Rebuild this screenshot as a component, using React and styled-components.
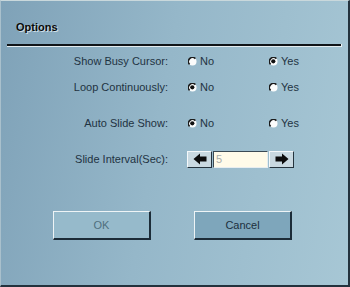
import React, { useState } from "react";
import styled, { createGlobalStyle } from "styled-components";

const Global = createGlobalStyle`
  html, body {
    margin: 0;
    padding: 0;
    background: #8fb1c4;
  }
  body {
    font-family: "Liberation Sans", Arial, sans-serif;
  }
`;

const Frame = styled.div`
  box-sizing: border-box;
  width: 350px;
  height: 287px;
  background: linear-gradient(100deg, #7fa2b8 0%, #95b7c9 45%, #a7c7d5 100%);
  border-top: 1px solid #c9d8dc;
  border-left: 1px solid #a9c0cc;
  border-right: 2px solid #23323d;
  border-bottom: 2px solid #23323d;
  color: #1f3342;
  font-size: 11px;
`;

const Title = styled.h1`
  margin: 0;
  padding: 19px 0 0 15px;
  height: 14px;
  line-height: 14px;
  font-size: 11px;
  font-weight: 700;
  color: #0a0a0a;
  text-shadow: 1px 1px 0 rgba(235, 242, 245, 0.75);
`;

const Rule = styled.div`
  margin: 10px 6px 0 6px;
  height: 2px;
  background: #101418;
  border-bottom: 1px solid #e4ecef;
  border-right: 1px solid #eef3f4;
`;

const Row = styled.div`
  display: grid;
  grid-template-columns: 187px 81px 1fr;
  align-items: center;
  height: 18px;
  margin-top: ${(p) => p.$space}px;
`;

const Label = styled.span`
  text-align: right;
  padding-right: 20px;
  white-space: nowrap;
`;

const Option = styled.label`
  display: flex;
  align-items: center;
  gap: 3px;
  cursor: pointer;
`;

const Spinner = styled.div`
  display: flex;
  align-items: center;
  gap: 1px;
  margin-left: -1px;
  grid-column: 2 / span 2;
`;

const ArrowButton = styled.button`
  box-sizing: border-box;
  width: 25px;
  height: 17px;
  padding: 0;
  display: flex;
  align-items: center;
  justify-content: center;
  background: #c9d9e1;
  border: 1px solid;
  border-color: #f4f8fa #25343e #25343e #f4f8fa;
`;

const ValueBox = styled.input`
  box-sizing: border-box;
  width: 55px;
  height: 17px;
  padding: 0 2px;
  background: #fffbe9;
  border: 1px solid;
  border-color: #3a4a54 #e8eef0 #e8eef0 #3a4a54;
  font-family: "Liberation Sans", Arial, sans-serif;
  font-size: 11px;
  color: #a9aeab;
  outline: none;
`;

const Buttons = styled.div`
  display: flex;
  gap: 43px;
  padding-left: 52px;
  margin-top: 43px;
`;

const Button = styled.button`
  box-sizing: border-box;
  width: 98px;
  height: 29px;
  background: ${(p) => (p.$dim ? "#96bacb" : "#7ea6bb")};
  color: ${(p) => (p.$dim ? "#4f6f7e" : "#1c2f3d")};
  border: 1px solid;
  border-width: 1px 2px 2px 1px;
  border-color: #eef4f6 #1c2c38 #1c2c38 #eef4f6;
  font-family: "Liberation Sans", Arial, sans-serif;
  font-size: 11px;
  padding: 0;
`;

function Radio({ checked }) {
  return (
    <svg width="9" height="9" viewBox="0 0 9 9">
      <circle cx="4.5" cy="4.5" r="4" fill="#fbfcfc" />
      <path
        d="M1.6 7.4 A4 4 0 0 1 7.4 1.6"
        stroke="#1a1a1a"
        strokeWidth="1.6"
        fill="none"
      />
      {checked && <circle cx="4.3" cy="4.3" r="2.1" fill="#111" />}
    </svg>
  );
}

function Arrow({ dir }) {
  const d =
    dir === "left"
      ? "M0.5 6 L7 0.5 L7 3.5 L13.5 3.5 L13.5 8.5 L7 8.5 L7 11.5 Z"
      : "M13.5 6 L7 0.5 L7 3.5 L0.5 3.5 L0.5 8.5 L7 8.5 L7 11.5 Z";
  return (
    <svg width="14" height="12" viewBox="0 0 14 12">
      <path d={d} fill="#0c0c0c" />
    </svg>
  );
}

function Choice({ label, value, onChange, space }) {
  return (
    <Row $space={space}>
      <Label>{label}</Label>
      <Option onClick={() => onChange(false)}>
        <Radio checked={!value} />
        No
      </Option>
      <Option onClick={() => onChange(true)}>
        <Radio checked={value} />
        Yes
      </Option>
    </Row>
  );
}

export default function App() {
  const [busy, setBusy] = useState(true);
  const [loop, setLoop] = useState(false);
  const [auto, setAuto] = useState(false);
  const [interval, setIntervalSec] = useState(5);

  return (
    <Frame>
      <Global />
      <Title>Options</Title>
      <Rule />
      <Choice label="Show Busy Cursor:" value={busy} onChange={setBusy} space={5} />
      <Choice label="Loop Continuously:" value={loop} onChange={setLoop} space={8} />
      <Choice label="Auto Slide Show:" value={auto} onChange={setAuto} space={18} />
      <Row $space={18}>
        <Label>Slide Interval(Sec):</Label>
        <Spinner>
          <ArrowButton onClick={() => setIntervalSec(Math.max(1, interval - 1))}>
            <Arrow dir="left" />
          </ArrowButton>
          <ValueBox value={interval} readOnly />
          <ArrowButton onClick={() => setIntervalSec(interval + 1)}>
            <Arrow dir="right" />
          </ArrowButton>
        </Spinner>
      </Row>
      <Buttons>
        <Button $dim>OK</Button>
        <Button>Cancel</Button>
      </Buttons>
    </Frame>
  );
}
